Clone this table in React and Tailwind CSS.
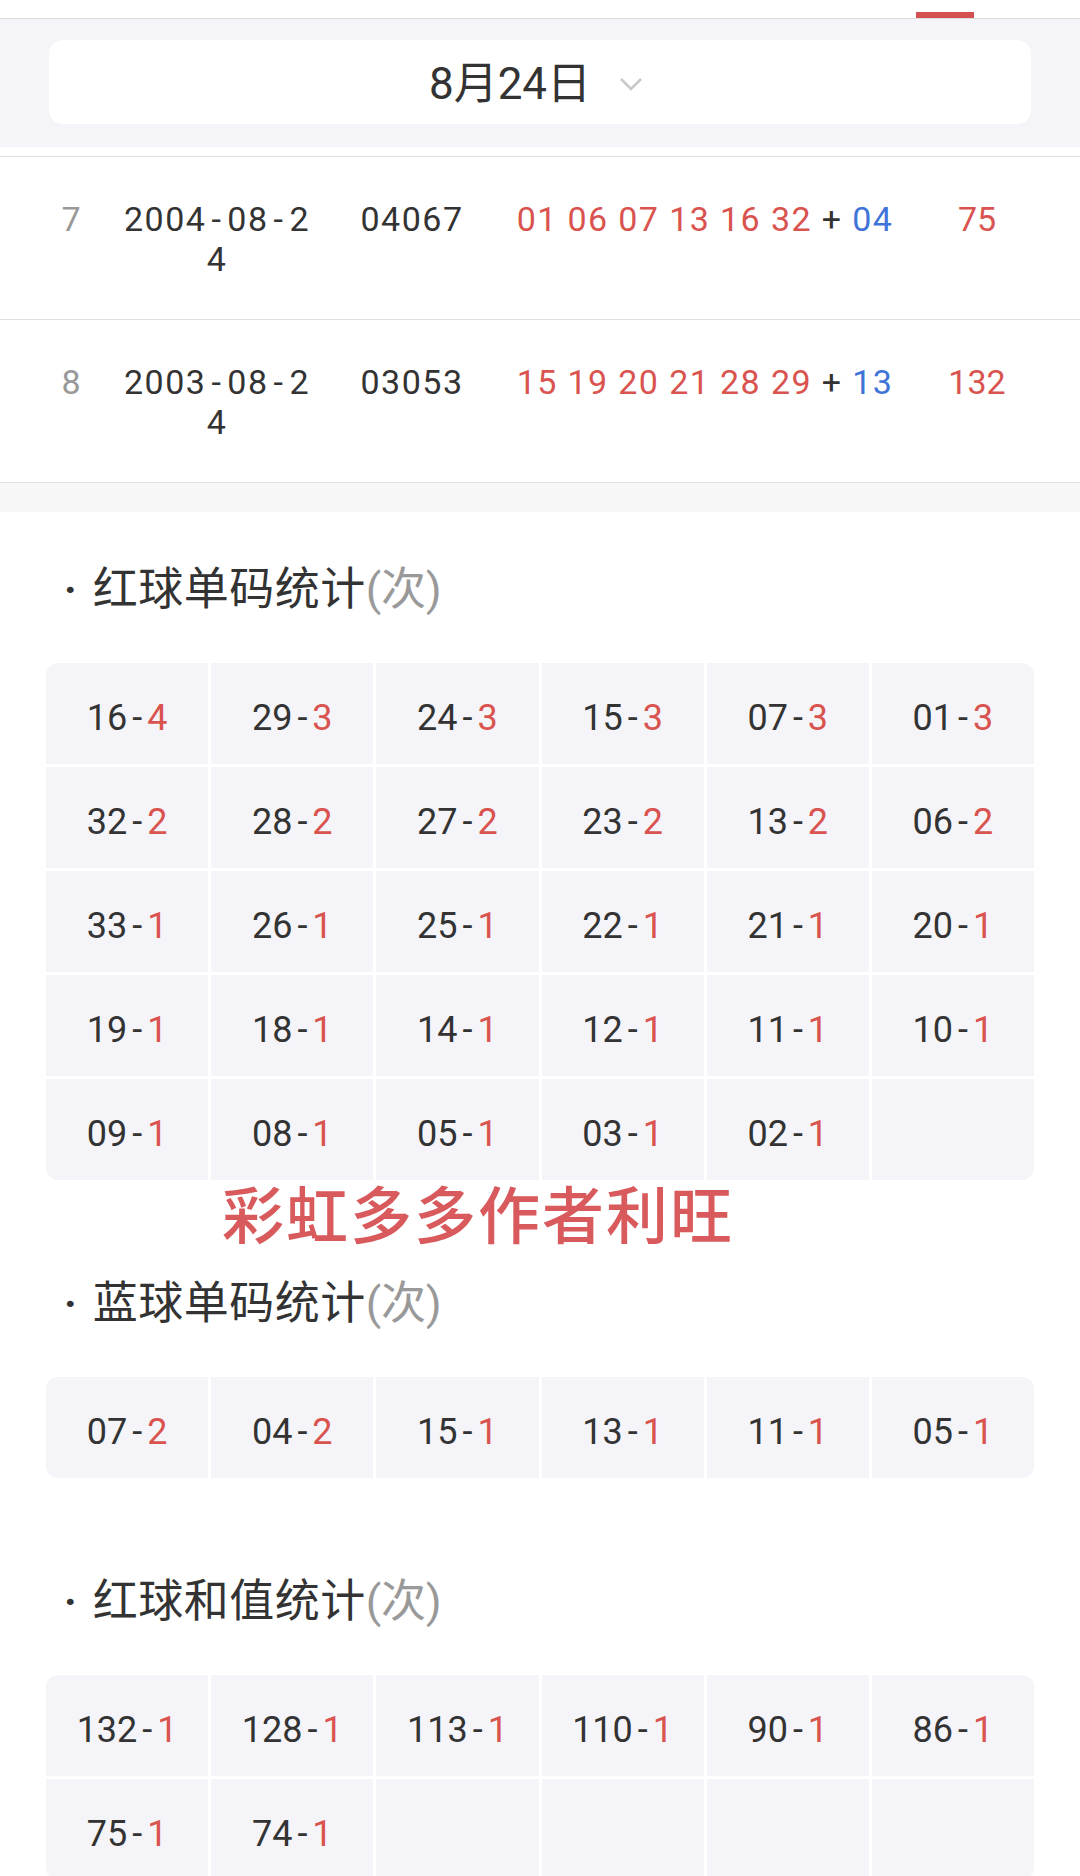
const rows = [
  { no: 7, date: "2004-08-24", issue: "04067", red: ["01", "06", "07", "13", "16", "32"], blue: "04", sum: "75" },
  { no: 8, date: "2003-08-24", issue: "03053", red: ["15", "19", "20", "21", "28", "29"], blue: "13", sum: "132" },
];

const redStats = [
  ["16", 4], ["29", 3], ["24", 3], ["15", 3], ["07", 3], ["01", 3],
  ["32", 2], ["28", 2], ["27", 2], ["23", 2], ["13", 2], ["06", 2],
  ["33", 1], ["26", 1], ["25", 1], ["22", 1], ["21", 1], ["20", 1],
  ["19", 1], ["18", 1], ["14", 1], ["12", 1], ["11", 1], ["10", 1],
  ["09", 1], ["08", 1], ["05", 1], ["03", 1], ["02", 1],
];

const blueStats = [["07", 2], ["04", 2], ["15", 1], ["13", 1], ["11", 1], ["05", 1]];

const sumStats = [["132", 1], ["128", 1], ["113", 1], ["110", 1], ["90", 1], ["86", 1], ["75", 1], ["74", 1]];

const font = { fontFamily: 'Roboto, "Noto Sans CJK SC", sans-serif' };

const DateText = ({ value }) => (
  <div className="w-[196px] break-all text-center leading-[40px] tracking-[1.5px]">
    {value.split("").map((c, i) =>
      c === "-" ? (
        <span key={i} className="mx-[5px]">-</span>
      ) : (
        <span key={i}>{c}</span>
      )
    )}
  </div>
);

const StatGrid = ({ items }) => {
  const cells = [...items];
  while (cells.length % 6 !== 0) cells.push(null);
  return (
    <div className="mx-[46px] grid grid-cols-6 gap-[3px] overflow-hidden rounded-[12px]">
      {cells.map((it, i) => (
        <div key={i} className="flex h-[101px] items-center justify-center bg-[#f5f5f9] pt-[8px] text-[36px] text-[#333]">
          {it && (
            <span>
              {it[0]}
              <span className="mx-[5px]">-</span>
              <span className="text-[#d9534f]">{it[1]}</span>
            </span>
          )}
        </div>
      ))}
    </div>
  );
};

const Section = ({ title, items }) => (
  <section className="pt-[48px] pb-[46px]">
    <h3 className="flex h-[60px] items-center pl-[64px] text-[45px] font-normal text-[#333]">
      <span className="mr-[16px] text-[42px] font-bold leading-none">·</span>
      <span className="tracking-[0.5px]">{title}</span>
      <span className="text-[#999]">(次)</span>
    </h3>
    <div className="mt-[43px]">
      <StatGrid items={items} />
    </div>
  </section>
);

export default function App() {
  return (
    <div className="relative w-[1080px] overflow-hidden bg-white" style={font}>
      <div className="flex h-[19px] items-end border-b border-[#dcdcdc]">
        <div className="ml-[916px] h-[6px] w-[58px] bg-[#d6504f]" />
      </div>

      <div className="bg-[#f5f5f9] px-[49px] pt-[21px] pb-[23px]">
        <div className="flex h-[84px] items-center justify-center gap-[28px] rounded-[14px] bg-white pt-[4px] pr-[8px]">
          <span className="text-[44px] leading-none text-[#333]">8月24日</span>
          <svg width="24" height="14" viewBox="0 0 24 14" fill="none">
            <path d="M2 2l10 10L22 2" stroke="#c8c8c8" strokeWidth="2.6" />
          </svg>
        </div>
      </div>

      <div className="mt-[9px] border-t border-[#e0e0e0]">
        {rows.map((r) => (
          <div key={r.no} className="flex h-[163px] items-start border-b border-[#e0e0e0] pl-[40px] pt-[42px] text-[34px] text-[#333]">
            <div className="w-[62px] text-center leading-[40px] text-[#999]">{r.no}</div>
            <div className="ml-[17px]">
              <DateText value={r.date} />
            </div>
            <div className="w-[194px] text-center leading-[40px] tracking-[1.5px]">{r.issue}</div>
            <div className="w-[392px] whitespace-nowrap text-center leading-[40px] tracking-[1.4px]">
              <span className="text-[#d9534f]">{r.red.join(" ")}</span>
              <span className="text-[#333]"> + </span>
              <span className="text-[#3e74d8]">{r.blue}</span>
            </div>
            <div className="w-[152px] text-center leading-[40px] text-[#d9534f]">{r.sum}</div>
          </div>
        ))}
      </div>

      <div className="h-[29px] bg-[#f7f7f7]" />

      <Section title="红球单码统计" items={redStats} />
      <Section title="蓝球单码统计" items={blueStats} />
      <Section title="红球和值统计" items={sumStats} />

      <div className="absolute left-[222px] top-[1186px] text-[62px] font-medium leading-[64px] tracking-[2px] text-[#d85a5c]">
        彩虹多多作者利旺
      </div>
    </div>
  );
}
